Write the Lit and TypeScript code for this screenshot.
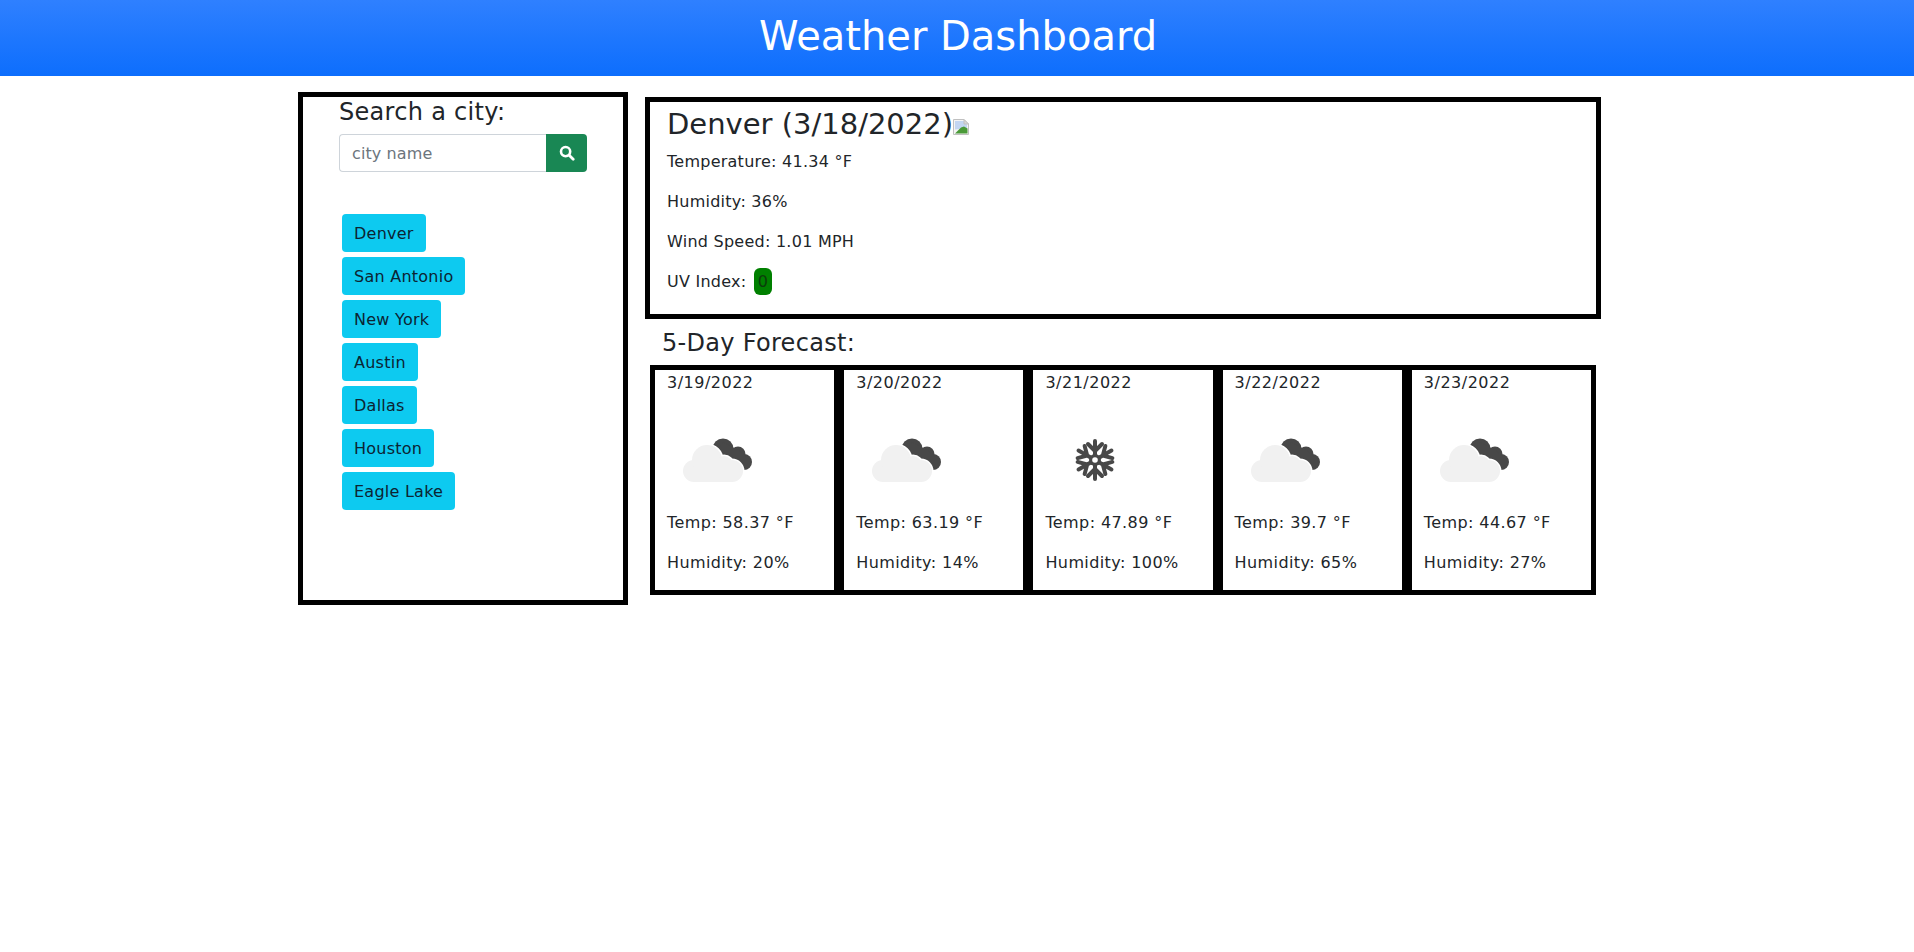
import { LitElement, html, css, svg } from 'lit';
import { customElement } from 'lit/decorators.js';

const cities = ['Denver', 'San Antonio', 'New York', 'Austin', 'Dallas', 'Houston', 'Eagle Lake'];

const forecast = [
  { date: '3/19/2022', temp: '58.37', humidity: '20', icon: 'cloud' },
  { date: '3/20/2022', temp: '63.19', humidity: '14', icon: 'cloud' },
  { date: '3/21/2022', temp: '47.89', humidity: '100', icon: 'snow' },
  { date: '3/22/2022', temp: '39.7', humidity: '65', icon: 'cloud' },
  { date: '3/23/2022', temp: '44.67', humidity: '27', icon: 'cloud' },
];

const lightCloud = svg`
  <circle cx="27" cy="61" r="11"></circle>
  <circle cx="40" cy="50" r="15"></circle>
  <circle cx="57" cy="55" r="9"></circle>
  <circle cx="65" cy="61" r="11"></circle>
  <rect x="27" y="55" width="38" height="17"></rect>`;

const cloudIcon = svg`
  <g fill="#484848">
    <circle cx="56" cy="39" r="10.5"></circle>
    <circle cx="71" cy="44" r="7.5"></circle>
    <circle cx="77" cy="52" r="8"></circle>
    <path d="M50 42 L56 32 L71 40 L80 47 L80 58 L60 60 Z"></path>
  </g>
  <g fill="#fff" stroke="#fff" stroke-width="3">${lightCloud}</g>
  <g fill="#f1f1f1">${lightCloud}</g>`;

const snowArm = svg`
  <path d="M50 50 V31 M43 34 L50 41 L57 34" fill="none" stroke="#484848" stroke-width="4" stroke-linecap="round" stroke-linejoin="round"></path>`;

const snowIcon = svg`
  ${[0, 60, 120, 180, 240, 300].map(
    (a) => svg`<g transform="rotate(${a} 50 50)">${snowArm}</g>`,
  )}
  <circle cx="50" cy="50" r="6" fill="#484848"></circle>
  <circle cx="50" cy="50" r="2.8" fill="#fff"></circle>`;

@customElement('app-root')
export class AppRoot extends LitElement {
  static styles = css`
    :host {
      display: block;
      font-family: 'DejaVu Sans', Verdana, sans-serif;
      font-size: 16px;
      letter-spacing: 0.25px;
      line-height: 24px;
      color: #212529;
      background: #fff;
      min-height: 952px;
    }
    header {
      height: 76px;
      background: linear-gradient(#2f80ff, #0d6efd);
      color: #fff;
      display: flex;
      align-items: center;
      justify-content: center;
      font-size: 40px;
      letter-spacing: 0;
      line-height: 48px;
      padding: 0 0 4px 2px;
      box-sizing: border-box;
    }
    .page {
      width: 1318px;
      margin: 16px auto 0;
      display: flex;
      gap: 17px;
      align-items: flex-start;
    }
    .sidebar {
      box-sizing: border-box;
      width: 330px;
      height: 513px;
      border: 5px solid #000;
      padding: 0 36px;
    }
    .sidebar h2 {
      margin: 0 0 6px;
      font-size: 24px;
      font-weight: 400;
      letter-spacing: 0.3px;
      line-height: 31px;
    }
    .search {
      display: flex;
      width: 248px;
      height: 38px;
    }
    .search input {
      box-sizing: border-box;
      flex: 1;
      min-width: 0;
      border: 1px solid #ced4da;
      border-right: none;
      border-radius: 4px 0 0 4px;
      padding: 2px 12px 0;
      font: inherit;
      letter-spacing: 0.1px;
      outline: none;
    }
    .search input::placeholder {
      color: #6c757d;
      opacity: 1;
    }
    .search button {
      width: 41px;
      border: none;
      border-radius: 0 4px 4px 0;
      background: #198754;
      display: flex;
      align-items: center;
      justify-content: center;
      padding: 0;
    }
    .cities {
      display: flex;
      flex-direction: column;
      align-items: flex-start;
      gap: 5px;
      margin: 42px 0 0 3px;
    }
    .cities button {
      height: 38px;
      padding: 2px 12px 0;
      border: none;
      border-radius: 4px;
      background: #0dcaf0;
      color: #0c2433;
      font: inherit;
      letter-spacing: 0.25px;
    }
    .main {
      width: 956px;
      margin-top: 5px;
    }
    .current {
      box-sizing: border-box;
      height: 222px;
      border: 5px solid #000;
      padding: 0 17px;
    }
    .current h1 {
      margin: 0;
      display: flex;
      align-items: center;
      font-size: 29px;
      font-weight: 400;
      letter-spacing: 0;
      line-height: 42px;
      height: 48px;
      padding-bottom: 4px;
      box-sizing: border-box;
    }
    .broken {
      margin: 6px 0 0 0;
    }
    p {
      margin: 0 0 16px;
    }
    .uv {
      background: #008000;
      border-radius: 6px;
      padding: 4px;
      margin-left: 2px;
      color: #0b3d0b;
    }
    .forecast-title {
      margin: 7px 0 5px 17px;
      font-size: 24px;
      font-weight: 400;
      letter-spacing: 0.3px;
      line-height: 34px;
    }
    .cards {
      display: flex;
      width: 946px;
      margin-left: 5px;
    }
    .card {
      box-sizing: border-box;
      flex: 1;
      height: 230px;
      border: 5px solid #000;
      padding: 0 12px;
      letter-spacing: 0.4px;
    }
    .card p:last-child {
      margin: 0;
    }
    .card .date {
      letter-spacing: 0.5px;
      padding-top: 1px;
      margin-bottom: 15px;
    }
    .icon {
      display: block;
      width: 100px;
      height: 100px;
      margin-bottom: 1px;
    }
  `;

  render() {
    return html`
      <header>Weather Dashboard</header>
      <div class="page">
        <aside class="sidebar">
          <h2>Search a city:</h2>
          <div class="search">
            <input placeholder="city name" />
            <button aria-label="search">
              <svg width="16" height="16" viewBox="0 0 16 16">
                <circle cx="6.6" cy="6.6" r="4.6" fill="none" stroke="#fff" stroke-width="2.6"></circle>
                <path d="M10.2 10.2 L14.2 14.2" stroke="#fff" stroke-width="2.8" stroke-linecap="round"></path>
              </svg>
            </button>
          </div>
          <div class="cities">
            ${cities.map((c) => html`<button>${c}</button>`)}
          </div>
        </aside>
        <div class="main">
          <section class="current">
            <h1>
              Denver (3/18/2022)<svg class="broken" width="16" height="16" viewBox="0 0 16 16">
                <path d="M0.5 0.5 H11 L15.5 5 V15.5 H0.5 Z" fill="#f4f4f4" stroke="#c0c0c0"></path>
                <path d="M2 2 H10.5 L14 5.5 V9 L2 10.5 Z" fill="#c3d6f2"></path>
                <path d="M2 14.5 L8 8.5 L11 7.5 L14.5 9.5 V14.5 Z" fill="#4a9a38"></path>
                <path d="M11 0.5 V5 H15.5 Z" fill="#d8d8d8" stroke="#c0c0c0"></path>
              </svg>
            </h1>
            <p>Temperature: 41.34 °F</p>
            <p>Humidity: 36%</p>
            <p>Wind Speed: 1.01 MPH</p>
            <p>UV Index: <span class="uv">0</span></p>
          </section>
          <h2 class="forecast-title">5-Day Forecast:</h2>
          <div class="cards">
            ${forecast.map(
              (d) => html`
                <div class="card">
                  <p class="date">${d.date}</p>
                  <svg class="icon" viewBox="0 0 100 100">${d.icon === 'snow' ? snowIcon : cloudIcon}</svg>
                  <p>Temp: ${d.temp} °F</p>
                  <p>Humidity: ${d.humidity}%</p>
                </div>
              `,
            )}
          </div>
        </div>
      </div>
    `;
  }
}
